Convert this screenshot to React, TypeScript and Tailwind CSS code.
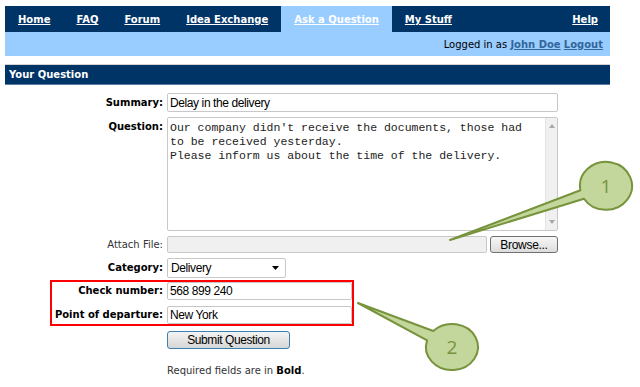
const nav = ["Home", "FAQ", "Forum", "Idea Exchange", "Ask a Question", "My Stuff"]

function Label({ text, bold = true, w = "w-[167px]" }: { text: string; bold?: boolean; w?: string }) {
  return (
    <div
      className={`${w} shrink-0 whitespace-nowrap text-right pr-[4px] text-[10px] leading-[12px] ${bold ? "font-bold text-black" : "text-[#333]"}`}
    >
      {text}
    </div>
  )
}

function TextBox({ value, w, h = "h-[19px]", grey = false }: { value: string; w: string; h?: string; grey?: boolean }) {
  return (
    <div
      className={`${w} ${h} border border-[#c8c8c8] rounded-[2px] flex items-center px-[2px] text-[12px] tracking-[-0.4px] text-black font-['Liberation_Sans',sans-serif] ${grey ? "bg-[#f0f0f0]" : "bg-white"}`}
    >
      {value}
    </div>
  )
}

export default function App() {
  return (
    <div className="relative w-[640px] h-[387px] bg-white overflow-hidden font-['DejaVu_Sans',Verdana,sans-serif]">
      {/* top navigation */}
      <div className="mt-[6px] ml-[5px] w-[605px] h-[26px] bg-[#003366] flex text-[10px] font-bold text-white">
        {nav.map((n) => (
          <div
            key={n}
            className={`h-full px-[13px] pt-[1px] flex items-center ${n === "Ask a Question" ? "bg-[#99ccff]" : ""}`}
          >
            <span className="underline">{n}</span>
          </div>
        ))}
        <div className="ml-auto h-full px-[12px] pt-[1px] flex items-center">
          <span className="underline">Help</span>
        </div>
      </div>
      <div className="ml-[5px] w-[605px] h-[24px] bg-[#99ccff] flex items-center justify-end pr-[7px] text-[10px] text-black">
        Logged in as&nbsp;
        <span className="font-bold text-[#336699] underline">John Doe</span>&nbsp;
        <span className="font-bold text-[#336699] underline">Logout</span>
      </div>

      {/* section header */}
      <div className="mt-[8px] ml-[5px] w-[605px] h-[21px] bg-[#003366] border-t border-t-[#d4d4d4] border-b border-b-[#5a7ba3] flex items-center pl-[4px] text-[10px] font-bold text-white">
        Your Question
      </div>

      {/* form */}
      <div className="mt-[8px] flex flex-col">
        <div className="flex items-center">
          <Label text="Summary:" />
          <TextBox value="Delay in the delivery" w="w-[391px]" />
        </div>

        <div className="flex mt-[5px]">
          <div className="pt-[4px]">
            <Label text="Question:" />
          </div>
          <div className="w-[391px] h-[114px] border border-[#c8c8c8] rounded-[2px] bg-white flex">
            <div className="flex-1 pl-[2px] pt-[3px] font-['Liberation_Mono',monospace] text-[11.5px] leading-[14px] text-[#222] whitespace-pre">
              {"Our company didn't receive the documents, those had\nto be received yesterday.\nPlease inform us about the time of the delivery."}
            </div>
            <div className="w-[12px] h-full bg-[#f0f0f0] border-l border-[#e4e4e4] flex flex-col items-center justify-between py-[6px]">
              <svg width="6" height="4" viewBox="0 0 6 4">
                <path d="M0 4 L3 0 L6 4 Z" fill="#a8a8a8" />
              </svg>
              <svg width="6" height="4" viewBox="0 0 6 4">
                <path d="M0 0 L3 4 L6 0 Z" fill="#a8a8a8" />
              </svg>
            </div>
          </div>
        </div>

        <div className="flex items-center mt-[5px]">
          <Label text="Attach File:" bold={false} />
          <TextBox value="" w="w-[320px]" h="h-[17px]" grey />
          <div className="ml-[3px] w-[68px] h-[17px] rounded-[3px] border border-[#707070] bg-gradient-to-b from-[#f7f7f7] to-[#dcdcdc] flex items-center justify-center text-[12px] tracking-[-0.3px] text-black font-['Liberation_Sans',sans-serif]">
            Browse...
          </div>
        </div>

        <div className="flex items-center mt-[5px]">
          <Label text="Category:" />
          <div className="w-[119px] h-[20px] border border-[#c8c8c8] rounded-[2px] bg-white flex items-center justify-between pl-[3px] pr-[6px] text-[12px] tracking-[-0.4px] text-black font-['Liberation_Sans',sans-serif]">
            Delivery
            <svg width="7" height="4" viewBox="0 0 7 4">
              <path d="M0 0 L7 0 L3.5 4 Z" fill="#000" />
            </svg>
          </div>
        </div>

        <div className="mt-[2px] ml-[50px] w-[304px] border-2 border-[#ff0000] flex flex-col gap-[6px]">
          <div className="flex items-center">
            <Label text="Check number:" w="w-[115px]" />
            <TextBox value="568 899 240" w="w-[185px]" h="h-[18px]" />
          </div>
          <div className="flex items-center">
            <Label text="Point of departure:" w="w-[115px]" />
            <TextBox value="New York" w="w-[185px]" h="h-[18px]" />
          </div>
        </div>

        <div className="mt-[5px] ml-[167px] w-[123px] h-[18px] rounded-[3px] border border-[#3c7fb1] bg-gradient-to-b from-[#f4f4f4] to-[#d6d6d6] flex items-center justify-center text-[12px] tracking-[-0.4px] text-black font-['Liberation_Sans',sans-serif]">
          Submit Question
        </div>

        <div className="mt-[16px] ml-[167px] text-[10px] leading-[12px] text-[#333]">
          Required fields are in <span className="font-bold text-black">Bold</span>.
        </div>
      </div>

      {/* callouts */}
      <svg className="absolute left-0 top-0 pointer-events-none" width="640" height="387" viewBox="0 0 640 387">
        <path
          d="M580.4 190.2 L450 240 L584 198.7 A26 24 0 1 0 580.4 190.2 Z"
          fill="#c3d69b"
          stroke="#77933c"
          strokeWidth="2"
          strokeLinejoin="round"
        />
        <text x="606" y="193" textAnchor="middle" fontSize="19" fill="#77933c" fontFamily="Open Sans, sans-serif">
          1
        </text>
        <path
          d="M433.3 331 L358 303 L427.1 340.3 A26 23 0 1 0 433.3 331 Z"
          fill="#c3d69b"
          stroke="#77933c"
          strokeWidth="2"
          strokeLinejoin="round"
        />
        <text x="452" y="354" textAnchor="middle" fontSize="19" fill="#77933c" fontFamily="Open Sans, sans-serif">
          2
        </text>
      </svg>
    </div>
  )
}
